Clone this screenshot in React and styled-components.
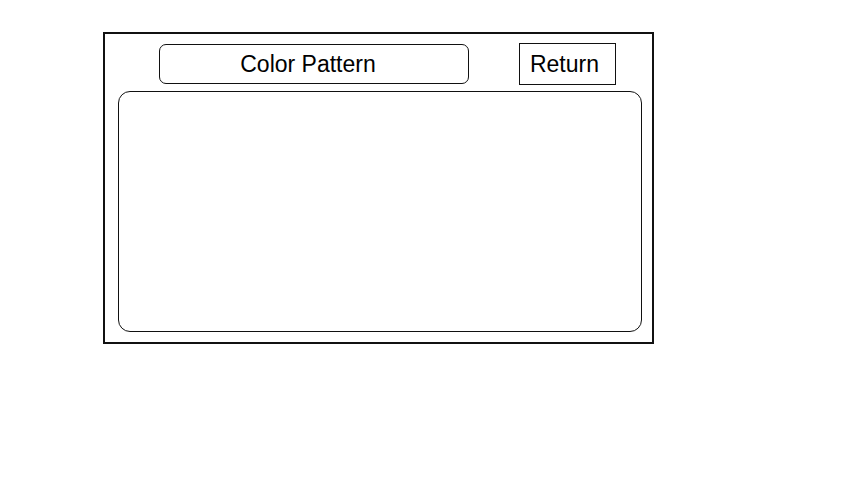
import React from "react";
import styled, { createGlobalStyle } from "styled-components";

const Global = createGlobalStyle`
  html, body { margin: 0; padding: 0; background: #fff; }
  body { margin: 8px; font-family: "Liberation Sans", Arial, sans-serif; }
`;

const Frame = styled.div`
  box-sizing: border-box;
  margin: 24px 0 0 95px;
  width: 551px;
  height: 312px;
  border: 2px solid #111;
  display: flex;
  flex-direction: column;
  padding: 9px 10px 10px 13px;
`;

const Header = styled.div`
  display: flex;
  align-items: center;
  gap: 50px;
  padding-left: 41px;
  height: 42px;
  flex-shrink: 0;
`;

const Title = styled.div`
  box-sizing: border-box;
  width: 310px;
  height: 40px;
  border: 1px solid #111;
  border-radius: 7px;
  display: flex;
  align-items: center;
  justify-content: center;
  padding-right: 12px;
  font-size: 23px;
  color: #000;
`;

const ReturnButton = styled.button`
  box-sizing: border-box;
  width: 97px;
  height: 42px;
  border: 1px solid #111;
  border-radius: 0;
  background: #fff;
  font-family: "Liberation Sans", Arial, sans-serif;
  font-size: 23px;
  color: #000;
  padding: 0 6px 0 0;
  cursor: pointer;
`;

const Content = styled.div`
  box-sizing: border-box;
  flex: 1;
  margin-top: 6px;
  border: 1px solid #111;
  border-radius: 12px;
`;

export default function App() {
  return (
    <>
      <Global />
      <Frame>
        <Header>
          <Title>Color Pattern</Title>
          <ReturnButton>Return</ReturnButton>
        </Header>
        <Content />
      </Frame>
    </>
  );
}
